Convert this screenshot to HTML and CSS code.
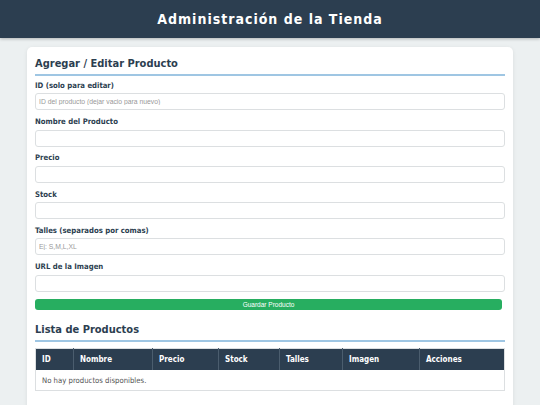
FILE: index.html
```html
<!DOCTYPE html>
<html lang="es">

<head>
    <meta charset="UTF-8">
    <meta name="viewport" content="width=device-width, initial-scale=1.0">
    <title>Administración de la Tienda</title>
    <link rel="stylesheet" href="styles.css">
</head>

<body>
    <header class="top-bar">
        <h1 class="title">Administración de la Tienda</h1>
    </header>

    <div class="container">
        <h2 class="section-title">Agregar / Editar Producto</h2>
        <form class="product-form">
            <div class="form-group">
                <label for="prod-id">ID (solo para editar)</label>
                <input type="text" id="prod-id" placeholder="ID del producto (dejar vacio para nuevo)">
            </div>
            <div class="form-group">
                <label for="prod-name">Nombre del Producto</label>
                <input type="text" id="prod-name">
            </div>
            <div class="form-group">
                <label for="prod-price">Precio</label>
                <input type="number" id="prod-price">
            </div>
            <div class="form-group">
                <label for="prod-stock">Stock</label>
                <input type="number" id="prod-stock">
            </div>
            <div class="form-group">
                <label for="prod-sizes">Talles (separados por comas)</label>
                <input type="text" id="prod-sizes" placeholder="Ej: S,M,L,XL">
            </div>
            <div class="form-group">
                <label for="prod-img">URL de la Imagen</label>
                <input type="text" id="prod-img">
            </div>
            <button type="button" class="save-btn">Guardar Producto</button>
        </form>

        <h2 class="section-title list-title">Lista de Productos</h2>
        <table class="product-table">
            <thead>
                <tr>
                    <th class="col-id">ID</th>
                    <th class="col-name">Nombre</th>
                    <th class="col-price">Precio</th>
                    <th class="col-stock">Stock</th>
                    <th class="col-sizes">Talles</th>
                    <th class="col-img">Imagen</th>
                    <th>Acciones</th>
                </tr>
            </thead>
            <tbody>
                <tr>
                    <td colspan="7">No hay productos disponibles.</td>
                </tr>
            </tbody>
        </table>
    </div>
</body>

</html>
```

FILE: styles.css
```css
* {
    margin: 0;
    padding: 0;
    box-sizing: border-box;
}

body {
    background-color: #ecf0f1;
    font-family: "DejaVu Sans Condensed", "DejaVu Sans", Verdana, sans-serif;
    color: #2c3e50;
    overflow: hidden;
}

.top-bar {
    background-color: #2c3e50;
    height: 38px;
    display: flex;
    justify-content: center;
    align-items: center;
    box-shadow: 0 1px 3px rgba(0, 0, 0, 0.25);
}

.title {
    color: #fff;
    font-size: 14px;
    font-weight: 700;
    letter-spacing: 1px;
}

.container {
    background-color: #fff;
    width: 486px;
    margin: 9px auto 0;
    padding: 9.5px 8px 20px;
    border-radius: 5px;
    box-shadow: 0 1px 4px rgba(0, 0, 0, 0.08);
    min-height: 400px;
}

.section-title {
    font-size: 11px;
    font-weight: 700;
    color: #2c3e50;
    line-height: 14px;
    padding-bottom: 3px;
    border-bottom: 2px solid #9fc6e3;
}

.product-form {
    margin-top: 5.3px;
}

.form-group {
    margin-bottom: 6.8px;
}

.form-group label {
    display: block;
    font-size: 7.7px;
    font-weight: 700;
    line-height: 10px;
    margin-bottom: 2.5px;
}

.form-group input {
    display: block;
    width: 100%;
    height: 17px;
    padding: 0 3px;
    border: 1px solid #dcdfe1;
    border-radius: 3px;
    font-family: "Liberation Sans", Arial, sans-serif;
    font-size: 6.8px;
}

.form-group input::placeholder {
    color: #999;
}

.save-btn {
    display: block;
    width: 467px;
    height: 11.5px;
    margin-top: 0.5px;
    background-color: #27ae60;
    color: #fff;
    border: none;
    border-radius: 3px;
    font-family: "Liberation Sans", Arial, sans-serif;
    font-size: 6.5px;
}

.list-title {
    margin-top: 13.2px;
}

.product-table {
    width: 100%;
    margin-top: 6px;
    border-collapse: collapse;
    border: 1px solid #dcdfe1;
    font-size: 7.7px;
}

.product-table th {
    background-color: #2c3e50;
    color: #fff;
    text-align: left;
    font-weight: 700;
    font-size: 8px;
    height: 21px;
    padding: 0 6px;
    border-left: 1px solid #4b5d6e;
}

.product-table th:first-child {
    border-left: none;
}

.product-table td {
    height: 21px;
    padding: 0 6px;
    color: #555;
}

.col-id { width: 38px; }
.col-name { width: 79px; }
.col-price { width: 66px; }
.col-stock { width: 61px; }
.col-sizes { width: 63px; }
.col-img { width: 77px; }
```
